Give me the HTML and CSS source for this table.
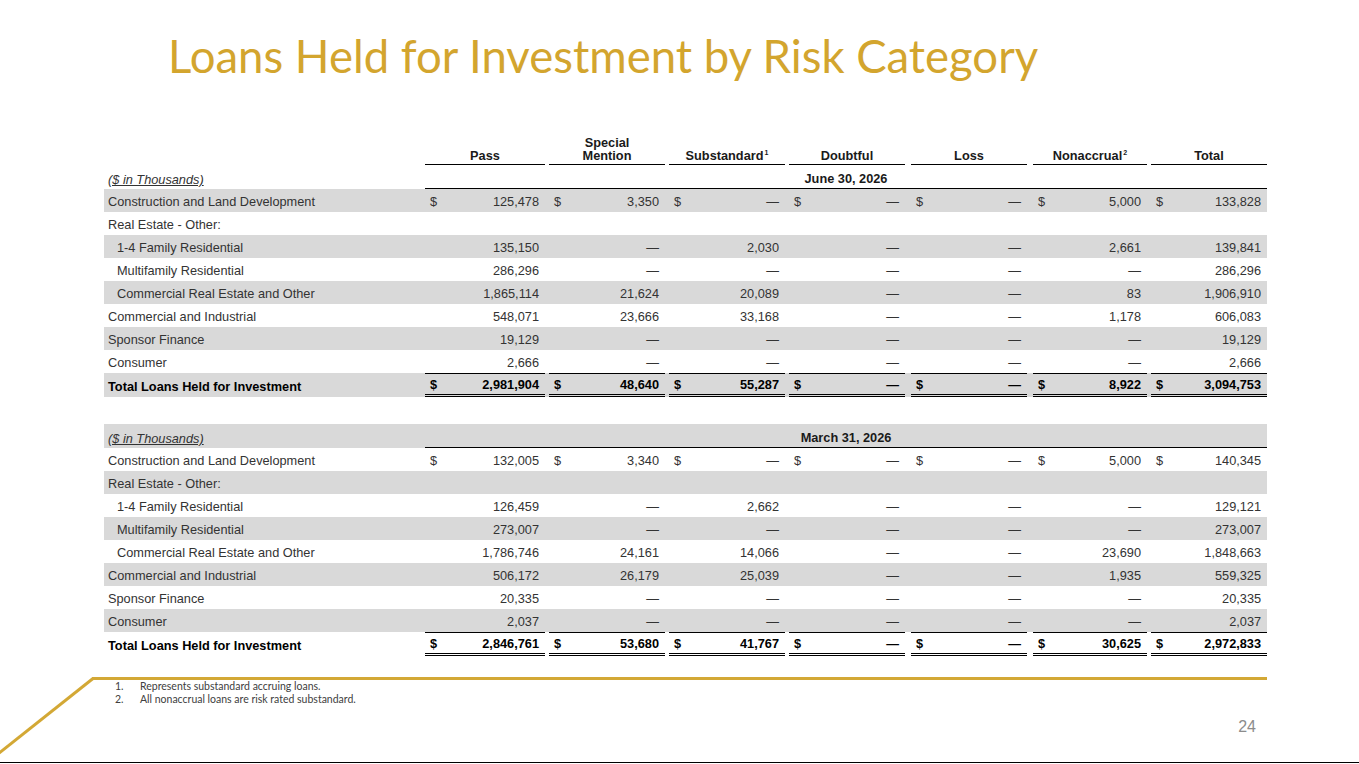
FILE: index.html
```html
<!DOCTYPE html>
<html>
<head>
<meta charset="utf-8">
<link rel="stylesheet" href="styles.css">
</head>
<body>
<div class="slide">
  <h1 class="title">Loans Held for Investment by Risk Category</h1>
  <div class="tables">
    <table class="grid">
      <colgroup><col class="c-label"><col class="c-n"><col class="c-n"><col class="c-n"><col class="c-n"><col class="c-w"><col class="c-n"><col class="c-n"></colgroup>
      <tr class="head">
        <td></td>
        <td><div class="hd"><span>Pass</span></div></td>
        <td><div class="hd"><span>Special<br>Mention</span></div></td>
        <td><div class="hd"><span>Substandard<sup>1</sup></span></div></td>
        <td><div class="hd"><span>Doubtful</span></div></td>
        <td><div class="hd"><span>Loss</span></div></td>
        <td><div class="hd"><span>Nonaccrual<sup>2</sup></span></div></td>
        <td><div class="hd"><span>Total</span></div></td>
      </tr>
      <tr class="sub">
        <td><div class="lbl units"><span>($ in Thousands)</span></div></td>
        <td colspan="7" class="datecell"><div class="date">June 30, 2026</div></td>
      </tr>
      <tr class="alt">
        <td><div class="lbl">Construction and Land Development</div></td>
        <td><div class="cell"><span>$</span><span>125,478</span></div></td>
        <td><div class="cell"><span>$</span><span>3,350</span></div></td>
        <td><div class="cell"><span>$</span><span>—</span></div></td>
        <td><div class="cell"><span>$</span><span>—</span></div></td>
        <td><div class="cell"><span>$</span><span>—</span></div></td>
        <td><div class="cell"><span>$</span><span>5,000</span></div></td>
        <td><div class="cell"><span>$</span><span>133,828</span></div></td>
      </tr>
      <tr>
        <td><div class="lbl">Real Estate - Other:</div></td>
        <td></td><td></td><td></td><td></td><td></td><td></td><td></td>
      </tr>
      <tr class="alt">
        <td><div class="lbl ind">1-4 Family Residential</div></td>
        <td><div class="cell"><span></span><span>135,150</span></div></td>
        <td><div class="cell"><span></span><span>—</span></div></td>
        <td><div class="cell"><span></span><span>2,030</span></div></td>
        <td><div class="cell"><span></span><span>—</span></div></td>
        <td><div class="cell"><span></span><span>—</span></div></td>
        <td><div class="cell"><span></span><span>2,661</span></div></td>
        <td><div class="cell"><span></span><span>139,841</span></div></td>
      </tr>
      <tr>
        <td><div class="lbl ind">Multifamily Residential</div></td>
        <td><div class="cell"><span></span><span>286,296</span></div></td>
        <td><div class="cell"><span></span><span>—</span></div></td>
        <td><div class="cell"><span></span><span>—</span></div></td>
        <td><div class="cell"><span></span><span>—</span></div></td>
        <td><div class="cell"><span></span><span>—</span></div></td>
        <td><div class="cell"><span></span><span>—</span></div></td>
        <td><div class="cell"><span></span><span>286,296</span></div></td>
      </tr>
      <tr class="alt">
        <td><div class="lbl ind">Commercial Real Estate and Other</div></td>
        <td><div class="cell"><span></span><span>1,865,114</span></div></td>
        <td><div class="cell"><span></span><span>21,624</span></div></td>
        <td><div class="cell"><span></span><span>20,089</span></div></td>
        <td><div class="cell"><span></span><span>—</span></div></td>
        <td><div class="cell"><span></span><span>—</span></div></td>
        <td><div class="cell"><span></span><span>83</span></div></td>
        <td><div class="cell"><span></span><span>1,906,910</span></div></td>
      </tr>
      <tr>
        <td><div class="lbl">Commercial and Industrial</div></td>
        <td><div class="cell"><span></span><span>548,071</span></div></td>
        <td><div class="cell"><span></span><span>23,666</span></div></td>
        <td><div class="cell"><span></span><span>33,168</span></div></td>
        <td><div class="cell"><span></span><span>—</span></div></td>
        <td><div class="cell"><span></span><span>—</span></div></td>
        <td><div class="cell"><span></span><span>1,178</span></div></td>
        <td><div class="cell"><span></span><span>606,083</span></div></td>
      </tr>
      <tr class="alt">
        <td><div class="lbl">Sponsor Finance</div></td>
        <td><div class="cell"><span></span><span>19,129</span></div></td>
        <td><div class="cell"><span></span><span>—</span></div></td>
        <td><div class="cell"><span></span><span>—</span></div></td>
        <td><div class="cell"><span></span><span>—</span></div></td>
        <td><div class="cell"><span></span><span>—</span></div></td>
        <td><div class="cell"><span></span><span>—</span></div></td>
        <td><div class="cell"><span></span><span>19,129</span></div></td>
      </tr>
      <tr>
        <td><div class="lbl">Consumer</div></td>
        <td><div class="cell"><span></span><span>2,666</span></div></td>
        <td><div class="cell"><span></span><span>—</span></div></td>
        <td><div class="cell"><span></span><span>—</span></div></td>
        <td><div class="cell"><span></span><span>—</span></div></td>
        <td><div class="cell"><span></span><span>—</span></div></td>
        <td><div class="cell"><span></span><span>—</span></div></td>
        <td><div class="cell"><span></span><span>2,666</span></div></td>
      </tr>
      <tr class="alt total">
        <td><div class="lbl">Total Loans Held for Investment</div></td>
        <td><div class="cell"><span>$</span><span>2,981,904</span></div></td>
        <td><div class="cell"><span>$</span><span>48,640</span></div></td>
        <td><div class="cell"><span>$</span><span>55,287</span></div></td>
        <td><div class="cell"><span>$</span><span>—</span></div></td>
        <td><div class="cell"><span>$</span><span>—</span></div></td>
        <td><div class="cell"><span>$</span><span>8,922</span></div></td>
        <td><div class="cell"><span>$</span><span>3,094,753</span></div></td>
      </tr>
    </table>

    <table class="grid second">
      <colgroup><col class="c-label"><col class="c-n"><col class="c-n"><col class="c-n"><col class="c-n"><col class="c-w"><col class="c-n"><col class="c-n"></colgroup>
      <tr class="sub alt">
        <td><div class="lbl units"><span>($ in Thousands)</span></div></td>
        <td colspan="7" class="datecell"><div class="date">March 31, 2026</div></td>
      </tr>
      <tr>
        <td><div class="lbl">Construction and Land Development</div></td>
        <td><div class="cell"><span>$</span><span>132,005</span></div></td>
        <td><div class="cell"><span>$</span><span>3,340</span></div></td>
        <td><div class="cell"><span>$</span><span>—</span></div></td>
        <td><div class="cell"><span>$</span><span>—</span></div></td>
        <td><div class="cell"><span>$</span><span>—</span></div></td>
        <td><div class="cell"><span>$</span><span>5,000</span></div></td>
        <td><div class="cell"><span>$</span><span>140,345</span></div></td>
      </tr>
      <tr class="alt">
        <td><div class="lbl">Real Estate - Other:</div></td>
        <td></td><td></td><td></td><td></td><td></td><td></td><td></td>
      </tr>
      <tr>
        <td><div class="lbl ind">1-4 Family Residential</div></td>
        <td><div class="cell"><span></span><span>126,459</span></div></td>
        <td><div class="cell"><span></span><span>—</span></div></td>
        <td><div class="cell"><span></span><span>2,662</span></div></td>
        <td><div class="cell"><span></span><span>—</span></div></td>
        <td><div class="cell"><span></span><span>—</span></div></td>
        <td><div class="cell"><span></span><span>—</span></div></td>
        <td><div class="cell"><span></span><span>129,121</span></div></td>
      </tr>
      <tr class="alt">
        <td><div class="lbl ind">Multifamily Residential</div></td>
        <td><div class="cell"><span></span><span>273,007</span></div></td>
        <td><div class="cell"><span></span><span>—</span></div></td>
        <td><div class="cell"><span></span><span>—</span></div></td>
        <td><div class="cell"><span></span><span>—</span></div></td>
        <td><div class="cell"><span></span><span>—</span></div></td>
        <td><div class="cell"><span></span><span>—</span></div></td>
        <td><div class="cell"><span></span><span>273,007</span></div></td>
      </tr>
      <tr>
        <td><div class="lbl ind">Commercial Real Estate and Other</div></td>
        <td><div class="cell"><span></span><span>1,786,746</span></div></td>
        <td><div class="cell"><span></span><span>24,161</span></div></td>
        <td><div class="cell"><span></span><span>14,066</span></div></td>
        <td><div class="cell"><span></span><span>—</span></div></td>
        <td><div class="cell"><span></span><span>—</span></div></td>
        <td><div class="cell"><span></span><span>23,690</span></div></td>
        <td><div class="cell"><span></span><span>1,848,663</span></div></td>
      </tr>
      <tr class="alt">
        <td><div class="lbl">Commercial and Industrial</div></td>
        <td><div class="cell"><span></span><span>506,172</span></div></td>
        <td><div class="cell"><span></span><span>26,179</span></div></td>
        <td><div class="cell"><span></span><span>25,039</span></div></td>
        <td><div class="cell"><span></span><span>—</span></div></td>
        <td><div class="cell"><span></span><span>—</span></div></td>
        <td><div class="cell"><span></span><span>1,935</span></div></td>
        <td><div class="cell"><span></span><span>559,325</span></div></td>
      </tr>
      <tr>
        <td><div class="lbl">Sponsor Finance</div></td>
        <td><div class="cell"><span></span><span>20,335</span></div></td>
        <td><div class="cell"><span></span><span>—</span></div></td>
        <td><div class="cell"><span></span><span>—</span></div></td>
        <td><div class="cell"><span></span><span>—</span></div></td>
        <td><div class="cell"><span></span><span>—</span></div></td>
        <td><div class="cell"><span></span><span>—</span></div></td>
        <td><div class="cell"><span></span><span>20,335</span></div></td>
      </tr>
      <tr class="alt">
        <td><div class="lbl">Consumer</div></td>
        <td><div class="cell"><span></span><span>2,037</span></div></td>
        <td><div class="cell"><span></span><span>—</span></div></td>
        <td><div class="cell"><span></span><span>—</span></div></td>
        <td><div class="cell"><span></span><span>—</span></div></td>
        <td><div class="cell"><span></span><span>—</span></div></td>
        <td><div class="cell"><span></span><span>—</span></div></td>
        <td><div class="cell"><span></span><span>2,037</span></div></td>
      </tr>
      <tr class="total">
        <td><div class="lbl">Total Loans Held for Investment</div></td>
        <td><div class="cell"><span>$</span><span>2,846,761</span></div></td>
        <td><div class="cell"><span>$</span><span>53,680</span></div></td>
        <td><div class="cell"><span>$</span><span>41,767</span></div></td>
        <td><div class="cell"><span>$</span><span>—</span></div></td>
        <td><div class="cell"><span>$</span><span>—</span></div></td>
        <td><div class="cell"><span>$</span><span>30,625</span></div></td>
        <td><div class="cell"><span>$</span><span>2,972,833</span></div></td>
      </tr>
    </table>
  </div>

  <div class="foot">
    <svg class="corner" width="92" height="85" viewBox="0 0 92 85">
      <line x1="-2" y1="77" x2="93" y2="1.5" stroke="#D3A835" stroke-width="3"/>
    </svg>
    <div class="notes">
      <div class="note"><span class="num">1.</span><span>Represents substandard accruing loans.</span></div>
      <div class="note"><span class="num">2.</span><span>All nonaccrual loans are risk rated substandard.</span></div>
      <div class="pagenum">24</div>
    </div>
  </div>
</div>
</body>
</html>
```

FILE: styles.css
```css
* { box-sizing: border-box; }

body {
  margin: 0;
  background: #ffffff;
}

.slide {
  width: 1359px;
  height: 763px;
  border-bottom: 1px solid #000000;
  overflow: hidden;
  font-family: "Liberation Sans", Arial, sans-serif;
  color: #333333;
}

.title {
  margin: 0;
  padding: 28px 0 0 168px;
  font-family: Lato, "Open Sans", sans-serif;
  font-weight: 400;
  font-size: 45.5px;
  line-height: 56px;
  color: #D3A52E;
  white-space: nowrap;
}

.tables {
  margin: 53px 0 0 104px;
  width: 1163px;
}

.grid {
  width: 1163px;
  table-layout: fixed;
  border-collapse: collapse;
  border-spacing: 0;
  font-size: 12.75px;
}

.grid.second {
  margin-top: 27px;
}

.c-label { width: 321px; }
.c-n { width: 120px; }
.c-w { width: 122px; }

.grid td {
  padding: 0;
  vertical-align: top;
}

.grid td:nth-child(n+3) { padding-left: 4px; }
.grid td:nth-child(6),
.grid td:nth-child(7) { padding-left: 6px; }
.grid td.datecell { padding-left: 0; }

.grid tr.alt td { background: #D9D9D9; }

.hd {
  height: 28px;
  border-bottom: 1px solid #000000;
  display: flex;
  align-items: flex-end;
  justify-content: center;
  text-align: center;
  padding-bottom: 2px;
  font-weight: bold;
  line-height: 13px;
  color: #1a1a1a;
}

.hd sup {
  font-size: 7px;
  line-height: 0;
  vertical-align: 5px;
  margin-left: 1px;
}

.lbl {
  height: 23px;
  display: flex;
  align-items: center;
  padding: 2px 0 0 4px;
  white-space: nowrap;
}

.lbl.ind { padding-left: 13px; }

.sub .lbl,
.sub .date {
  height: 24px;
  align-items: flex-end;
  padding-top: 0;
  padding-bottom: 2px;
  line-height: 15px;
}

.units span {
  font-style: italic;
  text-decoration: underline;
}

.date {
  display: flex;
  justify-content: center;
  border-bottom: 1px solid #000000;
  font-weight: bold;
  color: #1a1a1a;
}

.cell {
  height: 23px;
  display: flex;
  align-items: center;
  justify-content: space-between;
  padding: 2px 6px 0 5px;
  white-space: nowrap;
}

.total .lbl,
.total .cell {
  height: 24px;
  font-weight: bold;
  color: #000000;
}

.total .cell {
  border-top: 1px solid #000000;
  border-bottom: 3px double #000000;
  padding-top: 0;
}

.foot {
  display: flex;
  margin-top: 21px;
  height: 85px;
}

.corner {
  flex: none;
  display: block;
  overflow: visible;
}

.notes {
  width: 1175px;
  flex: none;
  border-top: 3px solid #D3A835;
  padding-left: 23px;
  font-family: Lato, "Open Sans", sans-serif;
  font-size: 10.5px;
  line-height: 13px;
  color: #404040;
}

.note {
  display: flex;
}

.num {
  width: 25px;
  flex: none;
}

.pagenum {
  margin-top: 12px;
  padding-right: 11px;
  text-align: right;
  font-family: "Liberation Sans", Arial, sans-serif;
  font-size: 16px;
  line-height: 18px;
  color: #8C8C8C;
}
```
